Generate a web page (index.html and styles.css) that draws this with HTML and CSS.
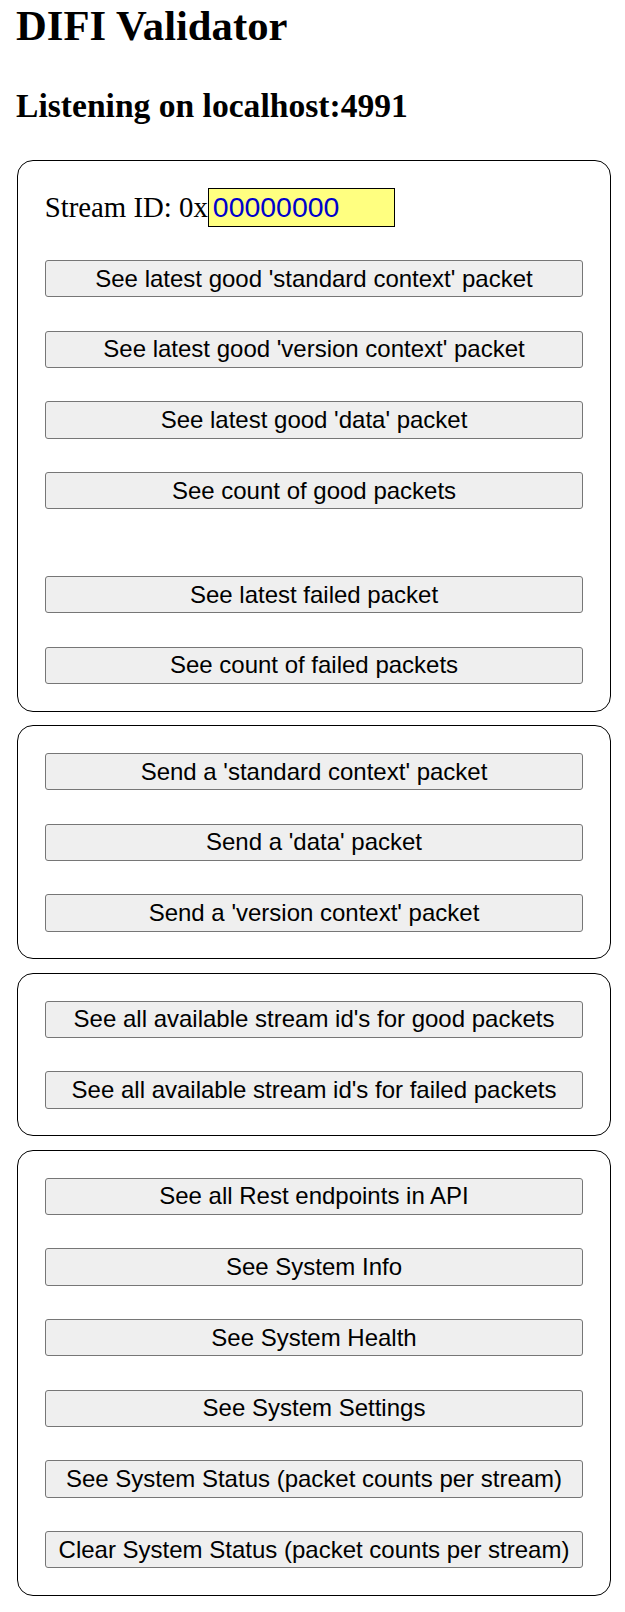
FILE: index.html
```html
<!DOCTYPE html>
<html>
<head>
<meta charset="utf-8">
<title>DIFI Validator</title>
<link rel="stylesheet" href="styles.css">
</head>
<body>
<h1 class="title">DIFI Validator</h1>
<h2 class="subtitle">Listening on localhost:4991</h2>

<div class="panel">
  <div class="stream-row">
    <label class="stream-label" for="sid">Stream ID: 0x</label><input class="stream-input" id="sid" type="text" value="00000000">
  </div>
  <button class="btn">See latest good 'standard context' packet</button>
  <button class="btn">See latest good 'version context' packet</button>
  <button class="btn">See latest good 'data' packet</button>
  <button class="btn">See count of good packets</button>
  <div class="spacer"></div>
  <button class="btn">See latest failed packet</button>
  <button class="btn">See count of failed packets</button>
</div>

<div class="panel">
  <button class="btn">Send a 'standard context' packet</button>
  <button class="btn">Send a 'data' packet</button>
  <button class="btn">Send a 'version context' packet</button>
</div>

<div class="panel">
  <button class="btn">See all available stream id's for good packets</button>
  <button class="btn">See all available stream id's for failed packets</button>
</div>

<div class="panel">
  <button class="btn">See all Rest endpoints in API</button>
  <button class="btn">See System Info</button>
  <button class="btn">See System Health</button>
  <button class="btn">See System Settings</button>
  <button class="btn">See System Status (packet counts per stream)</button>
  <button class="btn">Clear System Status (packet counts per stream)</button>
</div>
</body>
</html>
```

FILE: styles.css
```css
html, body {
  background: #ffffff;
}

body {
  margin: 0;
  padding: 0 14px 0 16px;
  font-family: "Liberation Serif", "Times New Roman", serif;
  color: #000000;
}

.title {
  font-size: 42.67px;
  font-weight: bold;
  line-height: 1;
  margin: 5px 0 0 0;
}

.subtitle {
  font-size: 33.6px;
  font-weight: bold;
  line-height: 1;
  margin: 41px 0 0 0;
}

.panel {
  margin: 0 0 13.7px 1px;
  border: 1px solid #000000;
  border-radius: 16px;
  padding: 26.67px;
  display: flex;
  flex-direction: column;
  gap: 33.33px;
}

.subtitle + .panel {
  margin-top: 37.8px;
}

.stream-row {
  display: flex;
  align-items: baseline;
  padding-top: 0.6px;
}

.stream-label {
  font-family: "Liberation Serif", "Times New Roman", serif;
  font-size: 28.8px;
  color: #000000;
}

.stream-input {
  box-sizing: border-box;
  width: 187px;
  height: 38.4px;
  margin: 0;
  padding: 0 4px;
  border: 1px solid #000000;
  border-radius: 0;
  background: #ffff80;
  color: #0000cc;
  font-family: "Liberation Sans", Arial, sans-serif;
  font-size: 28.44px;
  outline: none;
}

.spacer {
  height: 0;
}

.btn {
  box-sizing: border-box;
  width: 100%;
  height: 37.33px;
  margin: 0;
  padding: 0 6px;
  border: 1px solid #767676;
  border-radius: 3px;
  background: #efefef;
  color: #000000;
  font-family: "Liberation Sans", Arial, sans-serif;
  font-size: 24px;
  line-height: 1;
  cursor: pointer;
}
```
